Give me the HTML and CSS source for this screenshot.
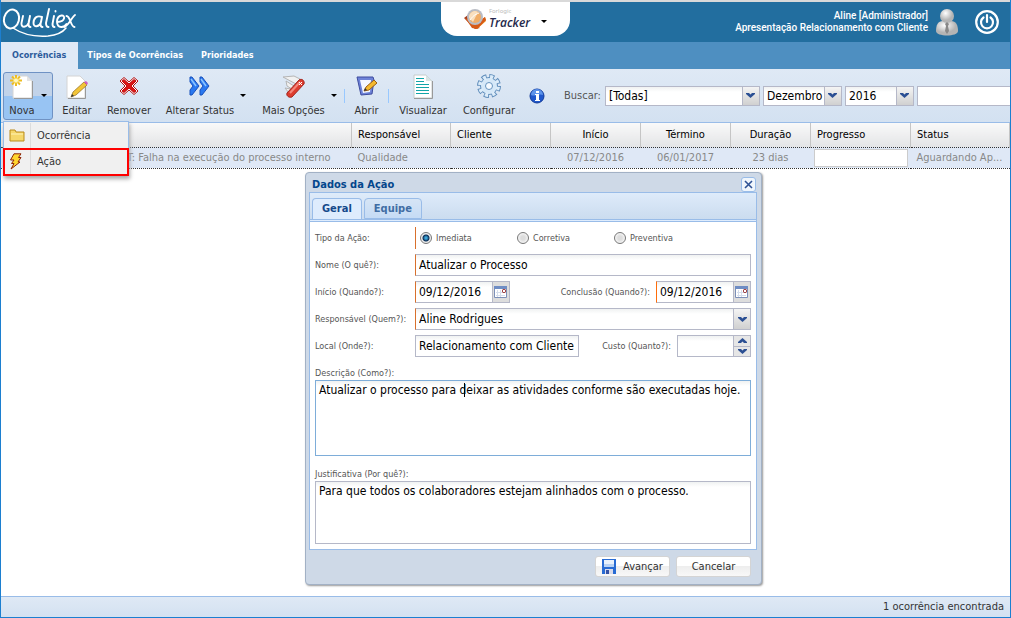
FILE: index.html
```html
<!DOCTYPE html>
<html lang="pt-BR">
<head>
<meta charset="utf-8">
<title>Qualiex Tracker</title>
<link rel="stylesheet" href="styles.css">
</head>
<body>
<svg class="defs" aria-hidden="true">
  <symbol id="chev" viewBox="0 0 9 5"><path d="M0 0h3l1.500 1.500L6 0h3v1L4.500 5 0 1z" fill="#2b4f93"/></symbol>
  <symbol id="cal" viewBox="0 0 14 13"><path d="M.5 1.500h12v10H.5z" fill="#fff" stroke="#7c8fb8"/><path d="M0 0h13v3H0z" fill="#6f8dc4"/><path d="M2 6.500h9M2 9.500h9M3.500 4v7M6.500 4v7" stroke="#d5ddec"/><rect x="8.500" y="3.500" width="3" height="3" rx="1" fill="#fff" stroke="#8a1010"/></symbol>
</svg>
<header class="banner">
  <div class="brand">
    <svg width="74" height="32" viewBox="0 0 74 32" role="img" aria-label="Qualiex">
      <g fill="none" stroke="#fff" stroke-linecap="round" stroke-linejoin="round">
        <ellipse cx="9.500" cy="13" rx="7.500" ry="9.500" transform="rotate(14 9.500 13)" stroke-width="2"/>
        <path d="M11 22c9 6 21 9 35 8 9-1 15-4 18-8" stroke-width="1.500"/>
        <path d="M21 10l-1.500 7c-.5 5 5 5 7 0l1.500-7-1.500 8c0 2 1 3 2 3M40 11c-5-2-8.500 1-8.500 6 0 5 6 4 7.500-1l1-5-1.500 7c0 2 1 3 2 3M47 3l-3 14c0 3 1 4 2.500 4M52 10l-1.500 8c0 2 1 3 2 3M53.500 5v.5M55.500 16c8 0 8-7 4-6.500-6 1-6 12 0 11.500 2 0 4-1 5-3M64.500 10c4 0 4 11 8 11M73 9c-3 2-6 10-10.500 12" stroke-width="1.900"/>
      </g>
    </svg>
  </div>
  <button class="product" aria-label="Forlogic Tracker">
    <svg width="22" height="20" viewBox="0 0 22 20"><path d="M0 9l4-3 5 9 7 4-5 1z" fill="#a33c1c"/><path d="M21 8l1 4-9 8-4-2z" fill="#f0941f"/><path d="M1 9l7 10 5 1 9-9-1-3-9 6z" fill="#d65a18"/><circle cx="11" cy="8" r="8" fill="#b9bcc4"/><circle cx="11" cy="8" r="6" fill="#f0ad68"/><path d="M5 9a6 6 0 0 1 9-6L9 13z" fill="#f9dfbf"/><path d="M6 11c3-4 4-5 9-7" stroke="#fff" fill="none"/></svg>
    <span class="product-name"><small>Forlogic</small><b>Tracker</b></span>
    <i class="caret"></i>
  </button>
  <div class="account">
    <p>Aline [Administrador]<br>Apresentação Relacionamento com Cliente</p>
    <svg width="22" height="27" viewBox="0 0 22 27"><defs><radialGradient id="gray" cx=".4" cy=".3"><stop stop-color="#fff"/><stop offset="1" stop-color="#b4b4b4"/></radialGradient></defs><path d="M0 22c0-6 2-10 7-10h8c5 0 7 4 7 10 0 6-22 6-22 0z" fill="url(#gray)"/><circle cx="11" cy="7" r="7" fill="url(#gray)"/><path d="M9 15l2-2 2 2-1 2 1 5-2 3-2-3 1-5z" fill="#888"/></svg>
    <button class="power" aria-label="Sair"><svg width="24" height="24" viewBox="0 0 24 24" fill="none" stroke="#fff" stroke-width="2.200" stroke-linecap="round"><circle cx="12" cy="12" r="10.800"/><path d="M8.500 7.500a6 6 0 1 0 7 0M12 5v7"/></svg></button>
  </div>
</header>
<nav class="sections">
  <a href="#ocorrencias" class="current">Ocorrências</a>
  <a href="#tipos">Tipos de Ocorrências</a>
  <a href="#prioridades">Prioridades</a>
</nav>
<div class="toolbar">
  <div class="new-wrap">
    <button class="tool has-caret pressed"><span><svg width="24" height="26" viewBox="0 0 24 26"><path d="M3 2h14l5 5v17H3z" fill="#fff" stroke="#d4d4d4"/><path d="M17 2v5h5z" fill="#e4e4e4"/><path d="M22.500 7v17.500H4" fill="none" stroke="#999"/><path d="M6 1v3M6 9v3M0 6.500h3M9 6.500h3M2 2.500l2 2M10 2.500l-2 2M2 10.500l2-2M10 10.500l-2-2" stroke="#edbd22" stroke-width="2"/><circle cx="6" cy="6.500" r="2.500" fill="#fff8be" stroke="#f5d24a"/></svg>Nova</span><i class="caret"></i></button>
    <div class="menu" role="menu">
      <button role="menuitem"><span class="menu-icon"><svg width="16" height="13" viewBox="0 0 16 13"><path d="M1 3V1h5l1 2h8v9H1z" fill="#f5d76b" stroke="#b98b1d"/><path d="M2 5h12" stroke="#fff3b8"/></svg></span>Ocorrência</button>
      <button role="menuitem" class="marked"><span class="menu-icon"><svg width="14" height="17" viewBox="0 0 14 17"><path d="M5 .8h7L9.500 4.500H12L9 9h2L2 16l3-5.500H2.500L5 7H1.500z" fill="#ffd52e" stroke="#8e2408" stroke-linejoin="round"/></svg></span>Ação</button>
    </div>
  </div>
  <button class="tool edit"><span><svg width="24" height="26" viewBox="0 0 24 26"><path d="M2 2h13l5 5v17H2z" fill="#fff" stroke="#d4d4d4"/><path d="M20.500 9v15.500H3" fill="none" stroke="#999"/><path d="M6 23l2-5L19 8l3 3-11 10z" fill="#f2c437" stroke="#8f6b22" stroke-width=".7"/><path d="M19 8l2-1 2 2-1 2z" fill="#d35bc4"/><path d="M6 23l1-3 2 2z" fill="#333"/></svg>Editar</span></button>
  <button class="tool remove"><span><svg width="20" height="26" viewBox="0 0 20 26"><path d="M5 3.500l5 4.500 5-4.500 4 3.500-5 5 5 5-4 3.500-5-4.500-5 4.500L1 17l5-5-5-5z" fill="#fff" stroke="#b31010" stroke-linejoin="round"/><path d="M5 5.500l5 4.500 5-4.500L17 7l-5 5 5 5-2 1.500-5-4.500-5 4.500L3 17l5-5-5-5z" fill="#dd1515" stroke="#c00d0d"/></svg>Remover</span></button>
  <button class="tool has-caret status"><span><svg width="21" height="26" viewBox="0 0 21 26"><path d="M1 3h2l7 9-7 9H1v-5l3-4-3-4z" fill="#2a78f0" stroke="#1750bb"/><path d="M2 5l5 7" stroke="#8dc6ff" stroke-width="1.500"/><path d="M11 3h2l7 9-7 9h-2v-5l3-4-3-4z" fill="#2a78f0" stroke="#1750bb"/><path d="M12 5l5 7" stroke="#8dc6ff" stroke-width="1.500"/></svg>Alterar Status</span><i class="caret"></i></button>
  <button class="tool has-caret more"><span><svg width="24" height="26" viewBox="0 0 24 26"><path d="M1 3l11-1 6 3-4 5zM4 7l8 5-2 3-5-3zM3 14l6 1-2 4z" fill="#f1f1f1" stroke="#b5b5b5"/><path d="M5 19L17 6c3-2 6 1 5 4L10 23c-3 1-6-1-5-4z" fill="#dd3c2e" stroke="#a32720"/><path d="M8 19L18 8" stroke="#f5877b" stroke-width="2"/><path d="M17 8l3 3M20 8l-3 3" stroke="#fff"/></svg>Mais Opções</span><i class="caret"></i></button>
  <i class="rule"></i>
  <button class="tool open"><span><svg width="22" height="26" viewBox="0 0 22 26"><path d="M1 3h16l1 3-2 14-11 1z" fill="#6e83d8" stroke="#3e4c9e"/><path d="M4 6h11l-1 12-7 1z" fill="#f4f7ff"/><path d="M8 17l2-4 8-7 3 3-8 7z" fill="#f4b92e" stroke="#9b5e12"/><path d="M8 17l1-3 2 2z" fill="#333"/></svg>Abrir</span></button>
  <i class="rule"></i>
  <button class="tool view"><span><svg width="20" height="26" viewBox="0 0 20 26"><path d="M1 1h12l6 6v17H1z" fill="#fff" stroke="#c4cccc"/><path d="M13 1v6h6z" fill="#d9e4e4"/><path d="M19.500 7v17.500H1" fill="none" stroke="#999"/><path d="M3 4.500h8M3 7.500h8M3 10.500h13M3 13.500h13M3 16.500h13M3 19.500h13" stroke="#12a5a8"/></svg>Visualizar</span></button>
  <button class="tool config"><span><svg width="24" height="26" viewBox="0 0 24 26"><circle cx="12" cy="12" r="9.500" fill="none" stroke="#5f8dbb" stroke-width="5" stroke-dasharray="4.800 2.661"/><circle cx="12" cy="12" r="9" fill="#5f8dbb"/><circle cx="12" cy="12" r="8" fill="#d5e8f8"/><circle cx="12" cy="12" r="9" fill="none" stroke="#dcecf9" stroke-width="4" stroke-dasharray="3 4.069" stroke-dashoffset="-.8"/><circle cx="12" cy="12" r="3.500" fill="#f5faff" stroke="#6593bf"/></svg>Configurar</span></button>
  <button class="info" aria-label="Informações"><svg width="16" height="16" viewBox="0 0 16 16"><circle cx="8" cy="8" r="7" fill="#2058cb" stroke="#123b9a"/><path d="M2 7a6 6 0 0 1 12 0C10 5 6 9 2 7z" fill="#5d93ea"/><path d="M7 3h3v2H7zM6 6h4v6h1v1H6v-1h1V7H6z" fill="#fff"/></svg></button>
  <div class="search">
    <label for="filter">Buscar:</label>
    <span class="combo wide"><select id="filter"><option>[Todas]</option></select><i class="trigger"><svg><use href="#chev"/></svg></i></span>
    <span class="combo month"><select aria-label="Mês"><option>Dezembro</option></select><i class="trigger"><svg><use href="#chev"/></svg></i></span>
    <span class="combo year"><select aria-label="Ano"><option>2016</option></select><i class="trigger"><svg><use href="#chev"/></svg></i></span>
    <input class="query" type="text" aria-label="Texto">
  </div>
</div>
<main>
  <table class="grid">
    <thead><tr><th class="c-title"></th><th class="c-99">Responsável</th><th class="c-100">Cliente</th><th class="c-90">Início</th><th class="c-90">Término</th><th class="c-80">Duração</th><th class="c-100">Progresso</th><th class="c-99">Status</th></tr></thead>
    <tbody><tr><td class="title">T: Falha na execução do processo interno</td><td>Qualidade</td><td></td><td class="mid">07/12/2016</td><td class="mid">06/01/2017</td><td class="mid">23 dias</td><td class="bar"><div></div></td><td>Aguardando Ap...</td></tr></tbody>
  </table>
  <section class="dialog" role="dialog" aria-labelledby="dlg">
    <div class="dialog-head"><h2 id="dlg">Dados da Ação</h2><button class="close" aria-label="Fechar"><svg width="9" height="9" viewBox="0 0 9 9"><path d="M1 1l7 7M8 1L1 8" stroke="#2f5294" stroke-width="1.600"/></svg></button></div>
    <form class="panel">
      <div class="tabs" role="tablist"><button type="button" role="tab" class="on">Geral</button><button type="button" role="tab">Equipe</button></div>
      <div class="fields">
        <div class="row"><span class="lbl">Tipo da Ação:</span><div class="radios need"><label><input type="radio" name="tipo" checked>Imediata</label><label><input type="radio" name="tipo">Corretiva</label><label><input type="radio" name="tipo">Preventiva</label></div></div>
        <div class="row"><label class="lbl" for="nome">Nome (O quê?):</label><input class="box need grow" id="nome" type="text" value="Atualizar o Processo"></div>
        <div class="row"><label class="lbl" for="ini">Início (Quando?):</label><span class="date need"><input id="ini" type="text" value="09/12/2016"><button type="button" aria-label="Calendário"><svg><use href="#cal"/></svg></button></span><label class="lbl2" for="fim">Conclusão (Quando?):</label><span class="date hot"><input id="fim" type="text" value="09/12/2016"><button type="button" aria-label="Calendário"><svg><use href="#cal"/></svg></button></span></div>
        <div class="row"><label class="lbl" for="resp">Responsável (Quem?):</label><span class="combo need grow"><select id="resp"><option>Aline Rodrigues</option></select><i class="trigger"><svg><use href="#chev"/></svg></i></span></div>
        <div class="row"><label class="lbl" for="local">Local (Onde?):</label><input class="box place" id="local" type="text" value="Relacionamento com Cliente"><label class="lbl2" for="custo">Custo (Quanto?):</label><span class="cost"><input id="custo" type="text"><span class="spin"><button type="button" aria-label="Aumentar"><svg class="flip"><use href="#chev"/></svg></button><button type="button" aria-label="Diminuir"><svg><use href="#chev"/></svg></button></span></span></div>
        <label class="over" for="desc">Descrição (Como?):</label>
        <div class="area-wrap"><textarea id="desc" class="active">Atualizar o processo para deixar as atividades conforme são executadas hoje.</textarea><i class="cursor"></i></div>
        <label class="over" for="just">Justificativa (Por quê?):</label>
        <textarea id="just" class="short">Para que todos os colaboradores estejam alinhados com o processo.</textarea>
      </div>
    </form>
    <div class="actions"><button><svg width="14" height="15" viewBox="0 0 14 15"><path d="M0 0h14v15H0z" fill="#286bd3"/><path d="M2 1h10v7H2z" fill="#e8f1fc"/><path d="M3 10h8v5H3z" fill="#d9dbea"/><path d="M4 11h3v4H4z" fill="#3452a5"/><path d="M2 5h10v3H2z" fill="#b9d2f3"/></svg>Avançar</button><button>Cancelar</button></div>
  </section>
</main>
<footer>1 ocorrência encontrada</footer>
</body>
</html>
```
FILE: styles.css
```css
* { box-sizing: border-box; }
body {
  margin: 0;
  min-height: 100vh;
  display: flex;
  flex-direction: column;
  border: solid #1c7fd0;
  border-width: 0 1px 1px 1px;
  background: #fff;
  font: 11px/14px "DejaVu Sans Condensed", "Noto Sans", sans-serif;
  color: #333;
}
button, input, select, textarea { font: inherit; color: inherit; margin: 0; padding: 0; border: 0; background: none; border-radius: 0; }
button { white-space: nowrap; }
svg { display: block; flex: none; }
.defs { position: absolute; width: 0; height: 0; }
.caret { border: 3px solid transparent; border-top-color: #000; border-bottom: 0; }

.banner {
  height: 42px;
  border-top: 2px solid #d9d9d9;
  background: #226e9f;
  display: grid;
  grid-template-columns: 1fr 129px 1fr;
  color: #fff;
}
.brand { padding: 4px 0 0 1px; }
.product { height: 34px; background: #fff; border-radius: 0 0 16px 16px; display: flex; align-items: center; justify-content: center; gap: 3px; color: #24284b; }
.product .caret { margin-left: 8px; margin-top: 5px; }
.product-name { display: flex; flex-direction: column; align-items: flex-start; }
.product-name small { font: 6px/8px "Noto Sans", sans-serif; color: #bbb; }
.product-name b { font: italic 600 12px/16px "Open Sans", "Noto Sans", sans-serif; }
.account { display: flex; align-items: center; justify-content: flex-end; gap: 8px; padding-right: 11px; }
.account p { margin: 0; text-align: right; font: 500 10px/12px Roboto, sans-serif; white-space: nowrap; }
.power { margin-left: 9px; }

.sections { height: 27px; background: #4e8fc1; display: flex; }
.sections a { padding: 0 9px; font: bold 9px/27px "DejaVu Sans Condensed", sans-serif; color: #fff; text-decoration: none; }
.sections .current { padding: 0 12px 0 11px; background: #dfe9f6; color: #2d5b9b; }

.toolbar {
  height: 54px;
  flex: none;
  display: flex;
  align-items: center;
  padding: 0 0 0 2px;
  background: linear-gradient(#dfe9f5, #d3e1f1);
  border-bottom: 1px solid #99bce8;
}
.tool { height: 48px; display: flex; align-items: center; justify-content: center; }
.tool span { display: flex; flex-direction: column; align-items: center; gap: 4px; }
.has-caret { gap: 6px; }
.new-wrap { position: relative; width: 50px; }
.pressed { width: 50px; border: 1px solid #6f92c4; border-radius: 3px; background: linear-gradient(#c2d3e9 50%, #98c4f3 50%); }
.edit { width: 48px; }
.remove { width: 56px; }
.status { width: 98px; }
.more { width: 89px; }
.open { width: 43px; }
.view { width: 68px; }
.config { width: 64px; }
.rule { width: 1px; height: 14px; background: #98c8ff; }
.info { margin-left: 8px; }
.search { flex: 1; display: flex; align-items: center; gap: 3px; margin-left: 19px; color: #555; font-size: 11px; min-width: 0; }
.search label { margin-right: 1px; }
.combo { display: flex; height: 20px; border: 1px solid #b5b8c8; background: linear-gradient(#f0f2f2, #fff 5px); font-size: 12px; color: #000; }
.combo select { appearance: none; flex: 1; min-width: 0; padding-left: 3px; }
.trigger { width: 17px; flex: none; border-left: 1px solid #b5b8c8; background: linear-gradient(#f4f4f4, #d0d0d0); display: grid; place-items: center; }
.trigger svg, .spin svg { width: 9px; height: 5px; }
.wide { width: 155px; }
.month { width: 79px; }
.year { width: 69px; }
.query { flex: 1; min-width: 0; height: 20px; border: 1px solid #b5b8c8; border-right: 0; background: #fff; }

.menu {
  position: absolute;
  z-index: 2;
  left: 0;
  top: 49px;
  width: 126px;
  padding-top: 1px;
  background: #f0f0f0;
  border: 1px solid #99bce8;
  box-shadow: 1px 3px 4px #aaa;
}
.menu button { width: 100%; height: 26px; display: flex; align-items: center; gap: 6px; padding-left: 5px; }
.menu .marked { outline: 2px solid #f00; outline-offset: -1px; }
.menu-icon { width: 22px; height: 100%; display: flex; align-items: center; border-right: 1px solid #dcdcdc; }

main { flex: 1; position: relative; }
.grid { width: 100%; table-layout: fixed; border-collapse: collapse; }
.grid th { height: 24px; padding: 0 6px; text-align: left; font-weight: normal; color: #000; background: linear-gradient(#f9f9f9, #e3e4e6); border-right: 1px solid #c5c5c5; }
.grid .c-99 { width: 99px; }
.grid .c-100 { width: 100px; }
.grid .c-90 { width: 90px; text-align: center; }
.grid .c-80 { width: 80px; text-align: center; }
.grid td { height: 21px; padding: 0 6px; white-space: nowrap; background: #dfe8f6; border: dotted #333; border-width: 1px 0; color: #888; }
.grid .title { padding-left: 126px; }
.grid .mid { text-align: center; }
.grid .bar { padding: 0 3px; }
.bar div { height: 18px; border: 1px solid #ccc; background: #fff; }

.dialog {
  position: absolute;
  left: 304px;
  top: 49px;
  width: 457px;
  padding: 0 4px 7px 3px;
  border: 1px solid #a2b1c5;
  border-radius: 4px;
  background: #ced9e7;
  box-shadow: 1px 1px 2px #999;
}
.dialog-head { height: 19px; display: flex; align-items: center; justify-content: space-between; padding: 4px 1px 0 3px; }
.dialog h2 { margin: 0; font-size: 11px; color: #04468c; }
.close { width: 15px; height: 15px; border: 1px solid #99bce8; border-radius: 3px; background: #f0f6fc; display: grid; place-items: center; }
.panel { border: 1px solid #99bce8; background: #fff; }
.tabs { height: 29px; display: flex; align-items: flex-end; gap: 2px; padding: 0 2px 2px; background: linear-gradient(#deebfa, #cbdcef 26px, #99bce8 26px 27px, #deecfd 27px); border-bottom: 1px solid #99bce8; }
.tabs button { height: 21px; padding: 0 9px; border: 1px solid #99bce8; border-radius: 4px 4px 0 0; background: linear-gradient(#d6e5f5, #c5dbf5); font-weight: bold; color: #416da3; }
.tabs .on { border-bottom: 0; background: #deecfd; color: #15498b; }
.fields { padding: 5px; }
.row { height: 22px; display: flex; align-items: center; margin-bottom: 5px; font-size: 12px; color: #000; }
.lbl { width: 100px; flex: none; }
.lbl, .lbl2, .over, .radios { font-size: 9px; color: #555; white-space: nowrap; }
.lbl2 { margin-left: auto; margin-right: 6px; }
.grow { flex: 1; min-width: 0; }
.row .combo, .box, .date, .cost { height: 22px; border: 1px solid #b5b8c8; background: linear-gradient(#f0f2f2, #fff 5px); }
.box { padding: 0 3px; }
.row .need { border-left-color: #d9702c; }
.row .hot { border-left-color: #ff6d0a; }
.radios { height: 22px; flex: 1; display: grid; grid-template-columns: 97px 97px 1fr; align-items: center; padding-left: 4px; border-left: 1px solid; }
.radios label { display: flex; align-items: center; gap: 4px; }
.radios input { appearance: none; width: 12px; height: 12px; border: 1px solid #777; border-radius: 50%; background: radial-gradient(#ddd 2px, #f5f5f5 5px); }
.radios input:checked { background: radial-gradient(circle at 5px 5px, #3ba4d8 0 1px, #0a2c54 3px, #eee 4px); }
.date { width: 95px; display: flex; }
.date input { flex: 1; min-width: 0; padding-left: 3px; }
.date button { width: 17px; border-left: 1px solid #b5b8c8; background: #ddd; display: grid; place-items: center; }
.date svg { width: 14px; height: 13px; }
.place { width: 164px; }
.cost { width: 74px; display: flex; }
.cost input { flex: 1; min-width: 0; }
.spin { width: 17px; border-left: 1px solid #b5b8c8; display: flex; flex-direction: column; }
.spin button { flex: 1; min-height: 0; display: grid; place-items: center; background: #e6e6e6; }
.spin button + button { border-top: 1px solid #b5b8c8; }
.flip { transform: rotate(180deg); }
.over { display: block; line-height: 14px; padding-top: 4px; height: 18px; }
.area-wrap { position: relative; margin-bottom: 7px; }
textarea { display: block; width: 100%; height: 76px; padding: 2px 3px; resize: none; overflow: hidden; border: 1px solid #b5b8c8; background: linear-gradient(#f0f2f2, #fff 5px); font-size: 12px; color: #000; }
.active { border-color: #7eadd9; }
.short { height: 63px; }
.cursor { position: absolute; left: 149px; top: 3px; width: 1px; height: 14px; background: #000; }
.actions { display: flex; justify-content: flex-end; gap: 6px; padding: 6px 6px 0; }
.actions button { width: 75px; height: 21px; border: 1px solid #d4d4d4; border-radius: 3px; background: linear-gradient(#fff 45%, #eee 50%, #f8f8f8); display: flex; align-items: center; justify-content: center; gap: 7px; }
footer { height: 21px; flex: none; padding: 0 6px; border-top: 1px solid #99bce8; background: linear-gradient(#dfe9f5, #d3e1f1); text-align: right; line-height: 20px; }
```
